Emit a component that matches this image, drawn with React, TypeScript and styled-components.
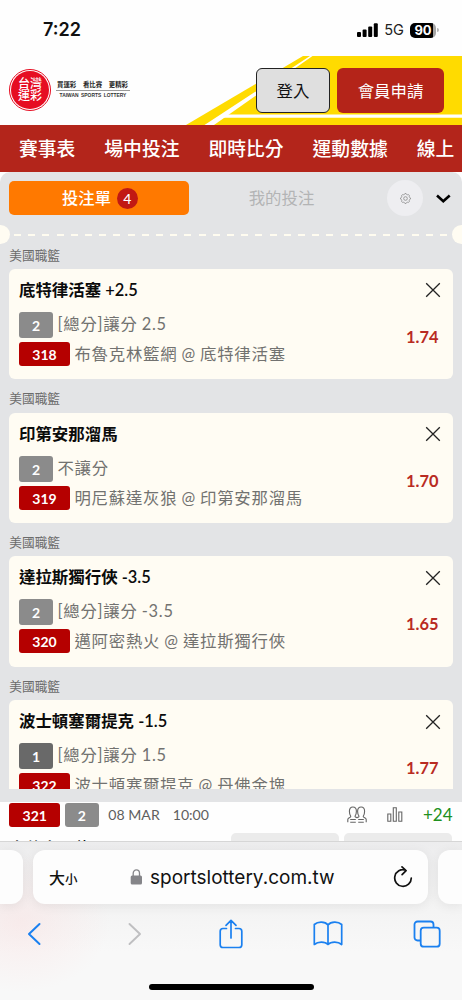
import React from 'react';
import styled, { createGlobalStyle } from 'styled-components';

const Global = createGlobalStyle`
  * { box-sizing: border-box; }
  body {
    margin: 0;
    background: #fff;
    font-family: Lato, "Noto Sans CJK TC", sans-serif;
  }
`;

const Screen = styled.div`
  width: 462px;
  height: 1000px;
  overflow: hidden;
  display: flex;
  flex-direction: column;
  background: #fefefe;
`;

const StatusBar = styled.div`
  flex: none;
  height: 56px;
  padding: 4px 23px 0 43px;
  display: flex;
  align-items: center;
  justify-content: space-between;
  font-family: Inter, sans-serif;
`;

const Clock = styled.span`
  font-size: 18px;
  font-weight: 600;
  line-height: 24px;
  color: #111;
`;

const StatusIcons = styled.div`
  display: flex;
  align-items: center;
  font-size: 14.6px;
  font-weight: 400;
  color: #222;
`;

const Network = styled.span`
  margin: 0 6px 0 6px;
`;

const Battery = styled.span`
  width: 26px;
  height: 15px;
  border-radius: 5px;
  background: linear-gradient(90deg, #000 90%, #a5a5a5 90%);
  color: #fff;
  font-size: 13px;
  font-weight: 700;
  line-height: 15px;
  text-align: center;
`;

const BatteryTip = styled.span`
  width: 2px;
  height: 4px;
  margin-left: 1px;
  border-radius: 0 2px 2px 0;
  background: #b5b5b5;
`;

const Header = styled.header`
  flex: none;
  position: relative;
  height: 69px;
  padding: 12px 18px 0 9px;
  display: flex;
  align-items: flex-start;
`;

const Field = styled.svg`
  position: absolute;
  right: 0;
  top: 0;
`;

const Seal = styled.div`
  position: relative;
  flex: none;
  margin-top: 1px;
  width: 42px;
  height: 42px;
  border-radius: 50%;
  border: 1px solid #e60d22;
  padding: 1px;
`;

const SealFace = styled.div`
  height: 38px;
  border-radius: 50%;
  background: #e60d22;
  color: #fff;
  display: flex;
  flex-direction: column;
  align-items: center;
  justify-content: center;
  font-size: 12px;
  font-weight: 500;
  line-height: 12.5px;
`;

const Slogan = styled.div`
  margin: 13px 0 0 5px;
  width: 74px;
  display: flex;
  flex-direction: column;
`;

const SloganTop = styled.div`
  height: 10px;
  display: flex;
  justify-content: space-between;
  padding: 0 2px 0 1px;
  border-bottom: 1px solid #999;
  font-size: 6.4px;
  font-weight: 700;
  line-height: 7px;
  color: #222;
  white-space: nowrap;
`;

const SloganSub = styled.div`
  font-family: "Liberation Sans", sans-serif;
  font-size: 4.9px;
  font-weight: 700;
  line-height: 9px;
  word-spacing: 1.2px;
  text-align: center;
  color: #333;
  white-space: nowrap;
`;

const HeaderButtons = styled.div`
  position: relative;
  margin-left: auto;
  display: flex;
  gap: 7px;
`;

const HeaderButton = styled.button<{ $primary?: boolean }>`
  width: ${(p) => (p.$primary ? 107 : 74)}px;
  height: 45px;
  padding: 0 0 2px;
  border-radius: 6px;
  border: ${(p) => (p.$primary ? 'none' : '1.4px solid #222')};
  background: ${(p) => (p.$primary ? '#b42419' : '#dfdfdf')};
  color: ${(p) => (p.$primary ? '#fff' : '#111')};
  font-family: inherit;
  font-size: 16.4px;
  font-weight: 400;
`;

const Nav = styled.nav`
  flex: none;
  height: 47px;
  padding-left: 19px;
  display: flex;
  align-items: center;
  gap: 29px;
  overflow: hidden;
  background: #b3251b;
  color: #fff;
  font-size: 18.8px;
  font-weight: 500;
  white-space: nowrap;
  line-height: 28px;
`;

const Slip = styled.section`
  flex: none;
  height: 630px;
  display: flex;
  flex-direction: column;
  border-radius: 10px 10px 0 0;
  background: #e3e4e6;
`;

const Tabs = styled.div`
  flex: none;
  height: 52px;
  padding: 9px 10px 0 9px;
  display: flex;
  align-items: flex-start;
`;

const ActiveTab = styled.div`
  width: 180px;
  height: 34px;
  border-radius: 5px;
  background: #ff7900;
  color: #fff;
  display: flex;
  align-items: center;
  justify-content: center;
  gap: 6px;
  padding-left: 2px;
  font-size: 16.3px;
  font-weight: 500;
  line-height: 24px;
`;

const Count = styled.span`
  width: 21px;
  height: 21px;
  border-radius: 50%;
  background: #c11913;
  font-size: 14px;
  line-height: 21px;
  text-align: center;
`;

const IdleTab = styled.div`
  width: 185px;
  margin-right: 1px;
  text-align: center;
  font-size: 16.4px;
  line-height: 34px;
  color: #b3b4b5;
`;

const Gear = styled.div`
  width: 36px;
  height: 36px;
  margin: -1px 13px 0 12px;
  border-radius: 50%;
  background: #eeeef1;
  display: flex;
  align-items: center;
  justify-content: center;
`;

const Chevron = styled.svg`
  margin-top: 13px;
`;

const Perforation = styled.div`
  flex: none;
  height: 20px;
  margin-bottom: 1.5px;
  display: flex;
  align-items: center;
`;

const Notch = styled.span<{ $right?: boolean }>`
  width: ${(p) => (p.$right ? 10 : 9.5)}px;
  height: 19px;
  margin-left: ${(p) => (p.$right ? 'auto' : '0')};
  background: #fffcf2;
  border-radius: ${(p) => (p.$right ? '10px 0 0 10px' : '0 10px 10px 0')};
`;

const Dashes = styled.span`
  flex: none;
  width: 435px;
  height: 2px;
  margin: 2px 0 0 4.5px;
  background: repeating-linear-gradient(90deg, #fffcf0 0 7px, transparent 7px 14.2px);
`;

const Bets = styled.div`
  height: 543px;
  overflow: hidden;
  padding: 0 9.5px 0 9.3px;
`;

const League = styled.div`
  height: 23.3px;
  font-size: 12.7px;
  line-height: 19px;
  color: #6b6b6b;
`;

const Card = styled.article`
  height: 110.5px;
  margin-bottom: 10px;
  padding: 9px 14px 0 9.7px;
  border-radius: 6px;
  background: #fffcf3;
  display: flex;
  justify-content: space-between;
`;

const Details = styled.div`
  display: flex;
  flex-direction: column;
`;

const Pick = styled.div`
  height: 34px;
  font-size: 16.45px;
  font-weight: 600;
  line-height: 25px;
  color: #0b0b0b;
  white-space: nowrap;
`;

const Line = styled.div`
  height: 26px;
  margin-bottom: 4px;
  display: flex;
  align-items: flex-start;
  gap: 4.5px;
  font-size: 16.4px;
  letter-spacing: 0.75px;
  word-spacing: -0.8px;
  line-height: 24px;
  color: #727270;
  white-space: nowrap;
`;

const Badge = styled.span<{ $kind: 'game' | 'away' | 'home' }>`
  width: ${(p) => (p.$kind === 'game' ? 51 : 34)}px;
  height: ${(p) => (p.$kind === 'game' ? 24 : 26)}px;
  line-height: ${(p) => (p.$kind === 'game' ? 25 : 27)}px;
  border-radius: 3px;
  background: ${(p) => ({ game: '#b50000', away: '#8b8b8b', home: '#696969' })[p.$kind]};
  color: #fff;
  font-size: 14px;
  font-weight: 700;
  letter-spacing: 0;
  text-align: center;
`;

const Side = styled.div`
  display: flex;
  flex-direction: column;
  align-items: flex-end;
`;

const Close = styled.svg`
  margin: 4.5px -2px 0 0;
`;

const Odds = styled.span`
  margin-top: 28.5px;
  font-size: 16.4px;
  font-weight: 700;
  line-height: 20px;
  color: #b92b22;
`;

const Match = styled.section`
  flex: none;
  height: 39px;
  overflow: hidden;
  padding: 0 9.5px 0 9.3px;
  background: #fefefe;
`;

const MatchRow = styled.div`
  height: 25px;
  display: flex;
  align-items: center;
  color: #5f5f5f;
`;

const MatchBadge = styled(Badge)`
  height: 24px;
  line-height: 25px;
  margin-right: 4.5px;
`;

const DateText = styled.span`
  margin-left: 5px;
  font-size: 14.1px;
`;

const TimeText = styled.span`
  margin-left: 13px;
  font-size: 14.1px;
`;

const MatchTools = styled.div`
  margin-left: auto;
  display: flex;
  align-items: center;
  gap: 20px;
`;

const More = styled.span`
  color: #209020;
  font-size: 17px;
`;

const TeamRow = styled.div`
  display: flex;
  gap: 5px;
  padding-top: 6px;
`;

const Team = styled.span`
  width: 217px;
  padding-top: 1.5px;
  font-size: 16.4px;
  font-weight: 500;
  line-height: 25px;
  color: #111;
`;

const OddsSlot = styled.span`
  width: 108px;
  height: 40px;
  border-radius: 5px;
  background: #ebebeb;
`;

const Browser = styled.footer`
  flex: 1;
  border-top: 1px solid #d6d6d6;
  display: flex;
  flex-direction: column;
  background:
    radial-gradient(ellipse 90px 70px at 20px 80px, rgba(250, 222, 222, 0.45), transparent),
    linear-gradient(180deg, #ededee 0, #f3f3f3 60px, #f8f8f8 110px, #f8f8f8 100%);
`;

const AddressRow = styled.div`
  height: 63px;
  padding-top: 8px;
  display: flex;
  gap: 10px;
`;

const NeighbourTab = styled.div<{ $right?: boolean }>`
  width: ${(p) => (p.$right ? 24 : 23)}px;
  height: 54px;
  flex: none;
  background: #fdfdfd;
  border-radius: ${(p) => (p.$right ? '12px 0 0 12px' : '0 12px 12px 0')};
  box-shadow: 0 2px 12px rgba(0, 0, 0, 0.07);
`;

const Address = styled.div`
  width: 395px;
  height: 54px;
  flex: none;
  padding: 0 15px 0 16px;
  display: flex;
  align-items: center;
  border-radius: 12px;
  background: #fdfdfd;
  box-shadow: 0 2px 12px rgba(0, 0, 0, 0.07);
  color: #111;
`;

const TextSize = styled.span`
  width: 81px;
  font-size: 16px;
  font-weight: 500;
`;

const Small = styled.span`
  font-size: 12.5px;
`;

const Url = styled.span`
  margin: 0 auto 0 7px;
  font-family: Inter, sans-serif;
  font-size: 19px;
  letter-spacing: 0;
`;

const Toolbar = styled.div`
  height: 57px;
  padding-left: 26px;
  display: flex;
  align-items: center;
  gap: 70px;
`;

const Back = styled.svg`
  margin-right: 15px;
`;

const Forward = styled.svg`
  margin-right: 6px;
`;

const HomeBar = styled.div`
  width: 165px;
  height: 6px;
  margin: 22px auto 0;
  border-radius: 3px;
  background: #000;
`;

type Bet = { pick: string; side: string; market: string; game: string; teams: string; odds: string };

const bets: Bet[] = [
  { pick: '底特律活塞 +2.5', side: '2', market: '[總分]讓分 2.5', game: '318', teams: '布魯克林籃網 @ 底特律活塞', odds: '1.74' },
  { pick: '印第安那溜馬', side: '2', market: '不讓分', game: '319', teams: '明尼蘇達灰狼 @ 印第安那溜馬', odds: '1.70' },
  { pick: '達拉斯獨行俠 -3.5', side: '2', market: '[總分]讓分 -3.5', game: '320', teams: '邁阿密熱火 @ 達拉斯獨行俠', odds: '1.65' },
  { pick: '波士頓塞爾提克 -1.5', side: '1', market: '[總分]讓分 1.5', game: '322', teams: '波士頓塞爾提克 @ 丹佛金塊', odds: '1.77' },
];

const BetItem = ({ bet }: { bet: Bet }) => (
  <>
    <League>美國職籃</League>
    <Card>
      <Details>
        <Pick>{bet.pick}</Pick>
        <Line>
          <Badge $kind={bet.side === '1' ? 'home' : 'away'}>{bet.side}</Badge>
          {bet.market}
        </Line>
        <Line>
          <Badge $kind="game">{bet.game}</Badge>
          {bet.teams}
        </Line>
      </Details>
      <Side>
        <Close width="16" height="16" viewBox="0 0 16 16" stroke="#222" strokeWidth="1.3">
          <path d="M1.2 1.2l13.6 13.6M14.8 1.2L1.2 14.8" />
        </Close>
        <Odds>{bet.odds}</Odds>
      </Side>
    </Card>
  </>
);

export default function App() {
  return (
    <Screen>
      <Global />
      <StatusBar>
        <Clock>7:22</Clock>
        <StatusIcons>
          <svg width="21" height="14" viewBox="0 0 21 14" fill="#000">
            <rect x="0" y="9" width="4" height="5" rx="1" />
            <rect x="5.6" y="6.5" width="4" height="7.5" rx="1" />
            <rect x="11.2" y="3.5" width="4" height="10.5" rx="1" />
            <rect x="16.8" y="0.3" width="4" height="13.7" rx="1" />
          </svg>
          <Network>5G</Network>
          <Battery>90</Battery>
          <BatteryTip />
        </StatusIcons>
      </StatusBar>

      <Header>
        <Field width="276" height="69" viewBox="0 0 276 69">
          <path d="M117 0H276V69H0Z" fill="#ffdb00" />
          <path d="M124 0h2.500L28 69H18.5Z" fill="#fff" />
          <path d="M37 58.5H276v3.3H32Z" fill="#fff" />
        </Field>
        <Seal>
          <SealFace>
            <span>台灣</span>
            <span>運彩</span>
          </SealFace>
        </Seal>
        <Slogan>
          <SloganTop>
            <span>買運彩</span>
            <span>看比賽</span>
            <span>更精彩</span>
          </SloganTop>
          <SloganSub>TAIWAN SPORTS LOTTERY</SloganSub>
        </Slogan>
        <HeaderButtons>
          <HeaderButton>登入</HeaderButton>
          <HeaderButton $primary>會員申請</HeaderButton>
        </HeaderButtons>
      </Header>

      <Nav>
        <span>賽事表</span>
        <span>場中投注</span>
        <span>即時比分</span>
        <span>運動數據</span>
        <span>線上</span>
      </Nav>

      <Slip>
        <Tabs>
          <ActiveTab>
            投注單
            <Count>4</Count>
          </ActiveTab>
          <IdleTab>我的投注</IdleTab>
          <Gear>
            <svg width="11" height="11" viewBox="0 0 12 12" fill="none" stroke="#8d8d8d" strokeWidth="0.9">
              <path d="M4.9 1.5l.5-.9h1.2l.5.9 1.3.5 1-.2.8.8-.2 1 .5 1.3.9.5v1.2l-.9.5-.5 1.3.2 1-.8.8-1-.2-1.3.5-.5.9H5.4l-.5-.9L3.6 10l-1 .2-.8-.8.2-1-.5-1.3-.9-.5V5.4l.9-.5L2 3.6l-.2-1 .8-.8 1 .2z" />
              <circle cx="6" cy="6" r="2" />
            </svg>
          </Gear>
          <Chevron width="15" height="10" viewBox="0 0 15 10" fill="none" stroke="#000" strokeWidth="2.6">
            <path d="M1 1.5l6.3 5.7L13.7 1.5" />
          </Chevron>
        </Tabs>
        <Perforation>
          <Notch />
          <Dashes />
          <Notch $right />
        </Perforation>
        <Bets>
          {bets.map((bet) => (
            <BetItem key={bet.game} bet={bet} />
          ))}
        </Bets>
      </Slip>

      <Match>
        <MatchRow>
          <MatchBadge $kind="game">321</MatchBadge>
          <MatchBadge $kind="away">2</MatchBadge>
          <DateText>08 MAR</DateText>
          <TimeText>10:00</TimeText>
          <MatchTools>
            <svg width="20" height="17" viewBox="0 0 20 17" fill="none" stroke="#666" strokeWidth="1.1">
              <path d="M.8 16.200v-2.700c0-1.300.8-1.700 2-2.100.9-.3 1.200-.9.700-1.700C2.700 8.500 2.400 7 2.400 5.300 2.400 2.600 3.600 1 5.900 1s3.500 1.600 3.500 4.300c0 1.700-.3 3.200-1.200 4.500-.5.800 0 1.300 1.800 1.800 1.800-.5 2.300-1 1.800-1.800-.9-1.300-1.200-2.800-1.200-4.500C10.600 2.600 11.800 1 14.100 1s3.500 1.600 3.500 4.300c0 1.700-.3 3.200-1.100 4.400-.5.800-.2 1.400.7 1.700 1.200.4 2 .8 2 2.100v2.700M3.200 13.500h5.600M11.200 13.500h5.600M3.200 16.200h5.600M11.200 16.200h5.600" />
            </svg>
            <svg width="16" height="15" viewBox="0 0 16 15" fill="none" stroke="#666" strokeWidth="1.1">
              <path d="M.8 7h3v7.200h-3zM6.300.8h3v13.400h-3zM11.800 5h3v9.200h-3z" />
            </svg>
            <More>+24</More>
          </MatchTools>
        </MatchRow>
        <TeamRow>
          <Team>多倫多暴龍</Team>
          <OddsSlot />
          <OddsSlot />
        </TeamRow>
      </Match>

      <Browser>
        <AddressRow>
          <NeighbourTab />
          <Address>
            <TextSize>
              大<Small>小</Small>
            </TextSize>
            <svg width="13" height="16" viewBox="0 0 13 16">
              <rect x="0.700" y="6.500" width="11.300" height="9" rx="1.500" fill="#858589" />
              <path d="M3.200 7V4.300a3.150 3.400 0 0 1 6.300 0V7" fill="none" stroke="#858589" strokeWidth="1.300" />
            </svg>
            <Url>sportslottery.com.tw</Url>
            <svg width="20" height="23" viewBox="0 0 20 23" fill="none" stroke="#111" strokeWidth="1.700" strokeLinecap="round" strokeLinejoin="round">
              <path d="M12.500 4.100A8.300 8.300 0 1 0 18.300 12M9 .9l4.100 3.700-4 4" />
            </svg>
          </Address>
          <NeighbourTab $right />
        </AddressRow>
        <Toolbar>
          <Back width="16" height="24" viewBox="0 0 16 24" fill="none" stroke="#1a80f0" strokeWidth="2" strokeLinecap="round" strokeLinejoin="round">
            <path d="M13.500 2L3 12l10.500 10" />
          </Back>
          <Forward width="16" height="24" viewBox="0 0 16 24" fill="none" stroke="#bfbfc1" strokeWidth="1.900" strokeLinecap="round" strokeLinejoin="round">
            <path d="M2.500 2L13 12 2.500 22" />
          </Forward>
          <svg width="24" height="30" viewBox="0 0 24 30" fill="none" stroke="#1a80f0" strokeWidth="1.700" strokeLinecap="round" strokeLinejoin="round">
            <path d="M7.500 9.500H4A2.800 2.800 0 0 0 1.200 12.300v13.400A2.800 2.800 0 0 0 4 28.500h16a2.800 2.800 0 0 0 2.800-2.800V12.300A2.800 2.800 0 0 0 20 9.500h-3.500M12 19V1.500M7 6.300l5-5 5 5" />
          </svg>
          <svg width="30" height="25" viewBox="0 0 30 25" fill="none" stroke="#1a80f0" strokeWidth="1.700" strokeLinejoin="round">
            <path d="M15 4C12 .3 5 .2 1.300 3.500v20C5 20.200 12 20.300 15 23.500c3-3.200 10-3.300 13.700 0v-20C25 .2 18 .3 15 4zM15 4v19.500" />
          </svg>
          <svg width="28" height="28" viewBox="0 0 28 28" fill="none" stroke="#1a80f0" strokeWidth="1.800">
            <path d="M7.500 20.500H4.500a3 3 0 0 1-3-3V4.500a3 3 0 0 1 3-3h13a3 3 0 0 1 3 3v3" />
            <rect x="7.700" y="7.700" width="19" height="19" rx="3" />
          </svg>
        </Toolbar>
        <HomeBar />
      </Browser>
    </Screen>
  );
}
